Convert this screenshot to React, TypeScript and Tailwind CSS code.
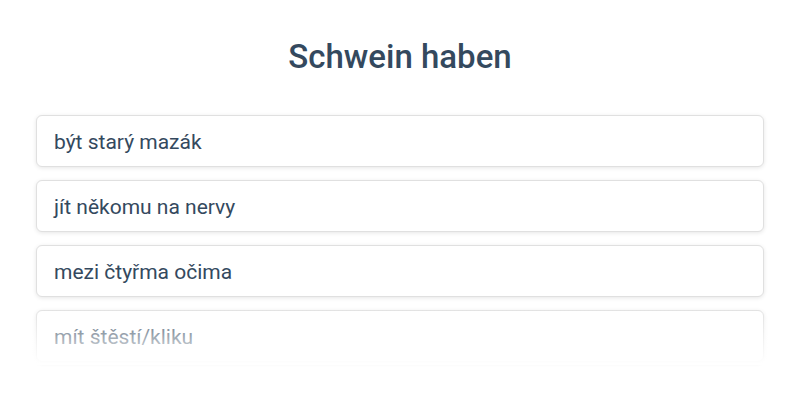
import React from "react";

const items = ["být starý mazák", "jít někomu na nervy", "mezi čtyřma očima", "mít štěstí/kliku"];

export default function App() {
  return (
    <div className="w-[800px] h-[400px] bg-white overflow-hidden" style={{ fontFamily: "Roboto, 'Noto Sans', sans-serif" }}>
      <h1 className="mt-[37px] text-center text-[33px] leading-[40px] font-medium text-[#34495e]">Schwein haben</h1>
      <div className="relative mt-[38px] px-9 flex flex-col gap-[13px]">
        {items.map((t) => (
          <div
            key={t}
            className="h-[52px] flex items-center pl-[17px] pt-[3px] rounded-md border border-[#e0e0e0] bg-white shadow-[0_1px_4px_rgba(0,0,0,0.1)] text-[21px] text-[#34495e]"
          >
            {t}
          </div>
        ))}
        <div className="pointer-events-none absolute left-0 right-0 top-[190px] h-[60px] bg-gradient-to-b from-white/0 to-white" />
      </div>
    </div>
  );
}
